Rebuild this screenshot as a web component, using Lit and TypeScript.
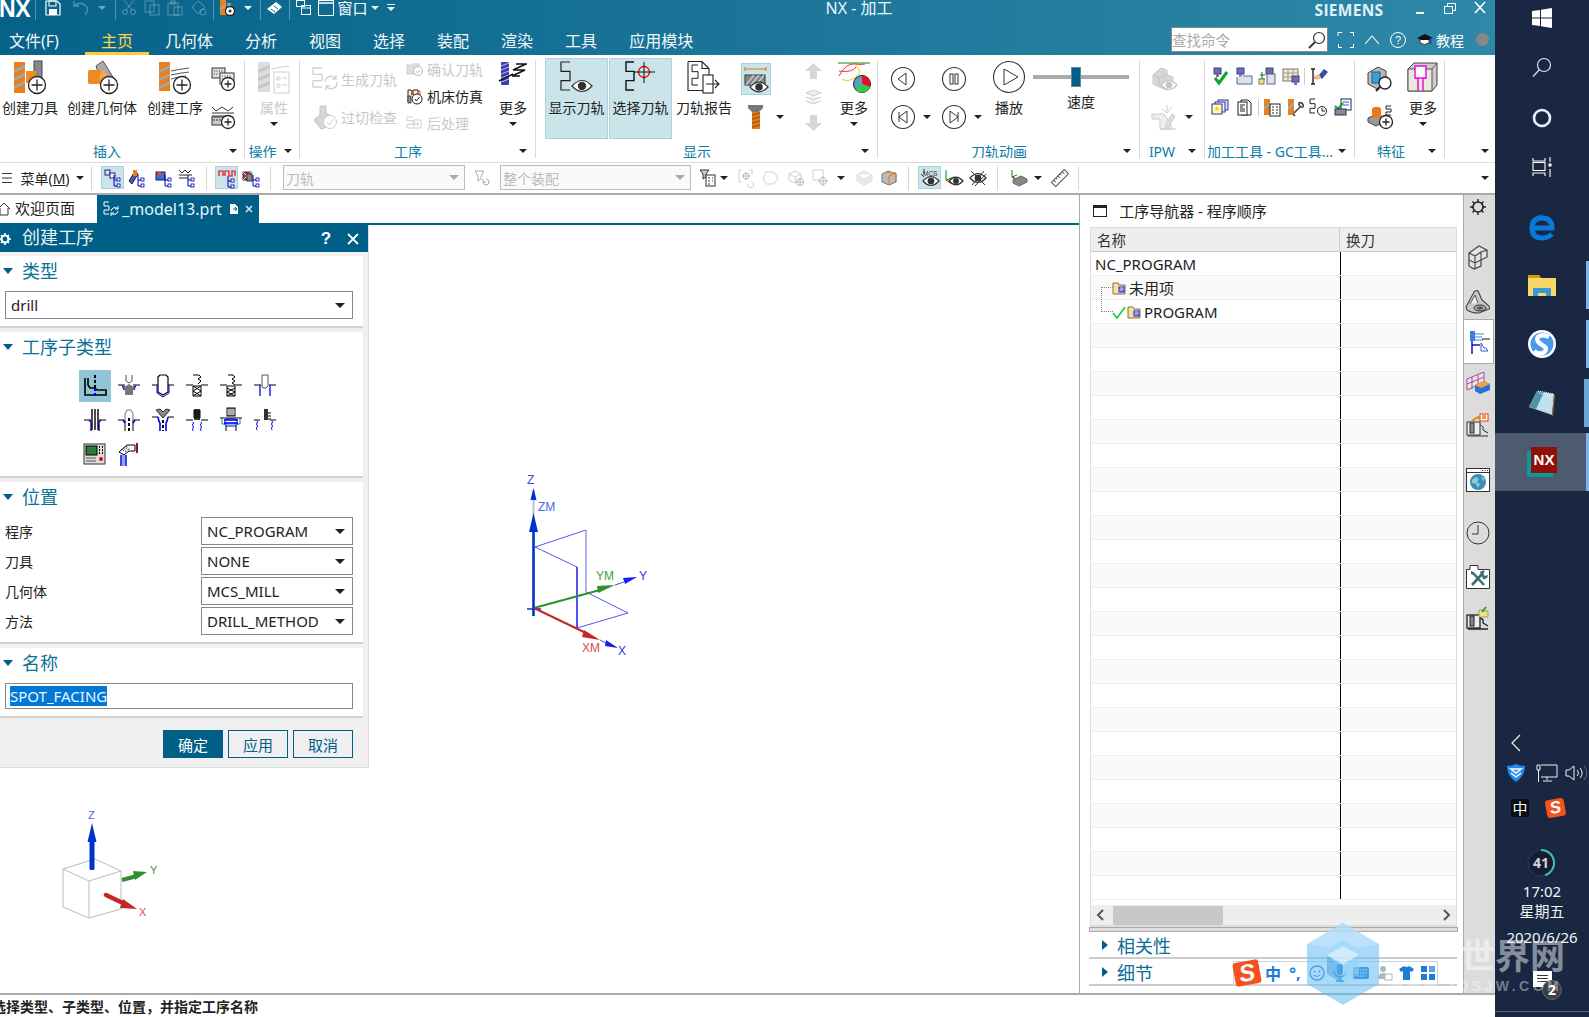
import { LitElement, html, svg, css } from "lit";
import { customElement } from "lit/decorators.js";

type Item = [number, number, unknown];
const seq = (start: number, items: Item[]) => {
  let p = start;
  return items.map(([x, w, t]) => {
    const m = x - p;
    p = x + w;
    return html`<div class="it" style="margin-left:${m}px;width:${w}px">${t}</div>`;
  });
};
const vseq = (start: number, items: Item[], cls = "vit") => {
  let p = start;
  return items.map(([y, h, t]) => {
    const m = y - p;
    p = y + h;
    return html`<div class=${cls} style="margin-top:${m}px;height:${h}px">${t}</div>`;
  });
};
const ic = (w: number, h: number, b: unknown) =>
  html`<svg class="ic" width=${w} height=${h} viewBox="0 0 ${w} ${h}">${b}</svg>`;
const tri = html`<i class="tri"></i>`;
const triW = html`<i class="tri w"></i>`;
const sep = html`<i class="sep"></i>`;

/* ---------- shared svg pieces ---------- */
const plus = (cx: number, cy: number, r = 8.5) => svg`<circle cx=${cx} cy=${cy} r=${r} fill="#fff" stroke="#222" stroke-width="1.3"/><path d="M${cx - r + 3} ${cy}H${cx + r - 3}M${cx} ${cy - r + 3}V${cy + r - 3}" stroke="#222" stroke-width="1.3" fill="none"/>`;
const mill = (x: number, y: number, w: number, h: number, c1 = "#e8801c", c2 = "#a5a5a5") => {
  const bands = [];
  for (let k = 5; k < h - 3; k += 8)
    bands.push(svg`<polygon points="${x},${y + k + 3} ${x + w},${y + k - 2} ${x + w},${y + k + 1} ${x},${y + k + 6}" fill=${c2}/>`);
  return svg`<rect x=${x} y=${y} width=${w} height=${h} fill=${c1}/>${bands}`;
};
const zz = (x: number, y: number, w: number, h: number, c = "#222", sw = 1.2) =>
  svg`<path d="M${x + w} ${y}H${x}V${y + h / 3}H${x + w}V${y + (2 * h) / 3}H${x}V${y + h}H${x + w}" fill="none" stroke=${c} stroke-width=${sw}/>`;
const eye = (cx: number, cy: number, rx: number, c = "#333") =>
  svg`<path d="M${cx - rx} ${cy}Q${cx} ${cy - rx * 1.1} ${cx + rx} ${cy}Q${cx} ${cy + rx * 1.1} ${cx - rx} ${cy}Z" fill="#fff" stroke=${c} stroke-width="1.2"/><circle cx=${cx} cy=${cy} r=${rx * 0.42} fill=${c}/>`;
const tree = (x: number, y: number) =>
  svg`<path d="M${x} ${y}v11h4M${x} ${y + 5}h4" stroke="#0000b0" fill="none"/><rect x=${x + 3} y=${y + 3} width="3" height="3" fill="#fff" stroke="#0000b0" stroke-width=".8"/><rect x=${x + 3} y=${y + 9} width="3" height="3" fill="#fff" stroke="#0000b0" stroke-width=".8"/>`;
const dg = "#cfcfcf";

/* ---------- ribbon icons ---------- */
const iTool = ic(34, 33, svg`${mill(1, 1, 11, 31)}<rect x="21" y="0" width="8" height="21" fill="#888" stroke="#444"/><rect x="13" y="10" width="10" height="12" fill="#ee8b1f"/>${plus(24, 24)}`);
const iGeom = ic(34, 33, svg`<polygon points="11,5 18,0 33,24 28,30 14,14" fill="#aaa" stroke="#555"/><rect x="3" y="9" width="15" height="14" rx="2" fill="#ee8b1f"/><ellipse cx="18" cy="16" rx="3.5" ry="7" fill="#f5a84a"/>${plus(24, 24)}`);
const iOp = ic(34, 33, svg`${mill(1, 1, 11, 29)}<path d="M13 10Q22 8 31 7M13 14Q22 12 31 11M13 18Q20 16 28 15" stroke="#555" fill="none"/>${plus(24, 24)}`);
const iSmall1 = ic(24, 24, svg`<rect x="1" y="1" width="13" height="10" fill="#ddd" stroke="#333"/><rect x="9" y="6" width="14" height="11" fill="#eee" stroke="#333"/><path d="M3 4h9M3 7h5M11 9h10M11 12h10" stroke="#333" stroke-dasharray="1 1.5"/>${plus(17, 17, 6.5)}`);
const iSmall2 = ic(24, 24, svg`<path d="M1 2l4 4 6-4 6 4 5-4M1 8h22M1 11h14" stroke="#333" fill="none"/><rect x="1" y="12" width="21" height="8" fill="#ccc" stroke="#333"/><path d="M2 15h18" stroke="#333" stroke-dasharray="2 1"/>${plus(17, 17, 6.5)}`);
const iAttr = ic(32, 33, svg`${mill(0, 1, 12, 30, "#ddd", "#c4c4c4")}<path d="M13 8Q22 6 31 5" stroke=${dg} fill="none"/><rect x="16" y="11" width="15" height="21" fill="#fff" stroke=${dg}/><path d="M19 16h3v3h-3zM24 17h5M19 23h3v3h-3zM24 24h5" stroke=${dg} fill="none"/>`);
const iGen = ic(25, 24, svg`${zz(0, 1, 9, 19, dg, 1.3)}<path d="M12 15a6 6 0 0 1 11-3M24 15a6 6 0 0 1-11 4M23 8v4h-4M13 23v-4h4" stroke=${dg} fill="none" stroke-width="1.3"/>`);
const iGouge = ic(25, 24, svg`<polygon points="1,15 7,10 7,1 13,1 13,8 20,12 20,20 8,24" fill="#d6d6d6" stroke="#c4c4c4"/><circle cx="17" cy="17" r="6.5" fill="#fff" stroke=${dg}/><path d="M14 17l2 3 4-6" stroke=${dg} fill="none"/>`);
const iConfirm = ic(16, 14, svg`<rect x="0" y="3" width="9" height="9" fill="#ddd" stroke=${dg}/><polygon points="5,1 12,1 14,6 9,8" fill="#ddd"/><circle cx="11" cy="9" r="4.5" fill="#fff" stroke="#bbb"/><path d="M9 9l1.5 2 2.5-3" stroke="#bbb" fill="none"/>`);
const iSim = ic(16, 16, svg`<path d="M1 14V2h3l2 5V2h5v5" stroke="#222" fill="#eee"/><rect x="4" y="2" width="2" height="5" fill="#d94d1a"/><path d="M10 3h3v4" stroke="#d94d1a" fill="none"/><circle cx="10" cy="11" r="5" fill="#fff" stroke="#222"/><path d="M8 11l1.5 2 3-4" stroke="#222" fill="none"/><rect x="1" y="8" width="3" height="7" fill="#999" stroke="#222" stroke-width=".7"/>`);
const iPost = ic(16, 14, svg`${zz(0, 1, 6, 11, dg, 1)}<rect x="7" y="4" width="7" height="8" fill="#fff" stroke=${dg}/><path d="M6 8h6M10 6l2 2-2 2" stroke=${dg} fill="none"/>`);
const iMoreA = ic(28, 24, svg`<rect x="2" y="1" width="8" height="23" rx="1" fill="#3d3fae"/><path d="M2 5l8-3M2 9l8-3M2 13l8-3M2 17l8-3M2 21l8-3" stroke="#b8b8e0" stroke-width="1"/><path d="M14 9L27 3H17L28 3M14 9H26L13 15M13 15H21M0 20L14 13" stroke="#111" stroke-width="1.5" fill="none"/>`);
const iShow = ic(33, 33, svg`${zz(1, 1, 9, 28)}${eye(22, 25, 10)}`);
const iSelect = ic(31, 31, svg`${zz(1, 1, 8, 28, "#111", 1.4)}<circle cx="19" cy="11" r="5.5" fill="none" stroke="#e00" stroke-width="1.3"/><path d="M19 1v21M9 11h21" stroke="#111"/>`);
const iReport = ic(34, 33, svg`<path d="M1 .5h14l7 7v11M1 .5v29h15M15 .5v7h7" fill="#fff" stroke="#222" stroke-width="1.1"/>${zz(5, 4, 6, 20, "#222", 1)}<rect x="16" y="14" width="10" height="18" fill="#fff" stroke="#222" stroke-width="1.1"/><path d="M19 23h13M28 19l4 4-4 4" stroke="#222" fill="none" stroke-width="1.1"/>`);
const iHlView = ic(28, 30, svg`<path d="M3 5h21M3 3v4M24 3v4" stroke="#e2761a" stroke-width="1.2"/><rect x="3" y="11" width="20" height="10" fill="#888" stroke="#333"/><path d="M4 21l8-10M9 21l8-10M14 21l8-10" stroke="#dde" stroke-width="1.2"/>${eye(17, 23, 9)}`);
const iScrew = ic(16, 24, svg`<polygon points="0,0 15,0 15,3 11,7 4,7 0,3" fill="#777"/><rect x="4" y="7" width="8" height="17" fill="#e07b1c"/><path d="M4 10l8-2M4 14l8-2M4 18l8-2M4 22l8-2" stroke="#a85a10" stroke-width="1.3"/>`);
const iUp = ic(17, 16, svg`<polygon points="8.5,0 17,8 12,8 12,16 5,16 5,8 0,8" fill="#d6d6d6"/>`);
const iLayers = ic(17, 16, svg`<path d="M1 4l7.5-3 7.5 3-7.5 3zM1 8l7.5 3 7.5-3M1 12l7.5 3 7.5-3" stroke="#ccc" fill="#eee"/>`);
const iDown = ic(17, 16, svg`<polygon points="8.5,16 17,8 12,8 12,0 5,0 5,8 0,8" fill="#d6d6d6"/>`);
const iMoreB = ic(33, 32, svg`<path d="M0 2h32" stroke="#0a8a0a"/><path d="M1 15Q8 2 16 3T27 3M1 10Q14 12 18 6" stroke="#e33" fill="none"/><path d="M4 18Q10 22 18 16T16 3" stroke="#f5c518" fill="none"/><circle cx="24" cy="23" r="8.5" fill="#5aa0b8" stroke="#222"/><path d="M24 23V14.5A8.5 8.5 0 0 1 32 26z" fill="#e8112d"/><path d="M24 23L32 26A8.5 8.5 0 0 1 18 29z" fill="#2ecc40"/>`);
const cBtn = (b: unknown, r = 11.5, w = 24) => ic(w, w, svg`<circle cx=${w / 2} cy=${w / 2} r=${r} fill="#fff" stroke="#333" stroke-width="1.1"/>${b}`);
const iPrev = cBtn(svg`<path d="M15 6L7 12l8 6z" fill="none" stroke="#333"/>`);
const iPause = cBtn(svg`<rect x="8" y="7" width="3" height="10" fill="none" stroke="#333"/><rect x="13" y="7" width="3" height="10" fill="none" stroke="#333"/>`);
const iPlay = cBtn(svg`<path d="M11 8l14 8-14 8z" fill="none" stroke="#333"/>`, 15.5, 32);
const iStepB = cBtn(svg`<path d="M8 7v10M16 6l-8 6 8 6z" fill="none" stroke="#333"/>`);
const iStepF = cBtn(svg`<path d="M16 7v10M8 6l8 6-8 6z" fill="none" stroke="#333"/>`);
const iIpw1 = ic(26, 24, svg`<polygon points="1,8 9,1 15,3 15,8 21,10 21,14 24,17 14,23 1,17" fill="#d6d6d6" stroke="#c8c8c8"/><path d="M1 8l6 3 8-3M7 11v8" stroke="#c0c0c0" fill="none"/>${eye(17, 18, 8, "#c4c4c4")}`);
const iIpw2 = ic(26, 24, svg`<path d="M0 9h12l7 11v4H8V14H0z" fill="#eee" stroke="#ccc"/><path d="M15 0v8M20 2l-5 6M10 4l5 4" stroke="#ccc"/><path d="M13 21l7-12 3 2-7 12zM8 24h16" fill="#ddd" stroke="#ccc"/>`);
const head = (x: number, y: number) => svg`<rect x=${x} y=${y} width="7" height="6" fill="#6a6ac0" stroke="#446"/><rect x=${x + 2} y=${y + 6} width="3" height="3" fill="#9a5fc0"/>`;
const g1 = ic(17, 17, svg`${head(2, 0)}<path d="M3 10l4 5 8-11" stroke="#0aa52a" stroke-width="3" fill="none"/>`);
const g2 = ic(17, 17, svg`${head(1, 0)}<path d="M1 9v7h15V8h-9" fill="#d8e4f2" stroke="#667"/>`);
const g3 = ic(17, 17, svg`${head(7, 0)}<rect x="8" y="6" width="8" height="10" fill="#d8e4f2" stroke="#667"/><path d="M3 4v12M1 7h5M1 11h5" stroke="#0a7a0a"/><rect x="0" y="11" width="5" height="5" fill="#f5e27a" stroke="#777"/>`);
const g4 = ic(17, 17, svg`<rect x="0" y="1" width="15" height="12" fill="#f3edc6" stroke="#777"/><path d="M0 5h15M0 9h15M5 1v12M10 1v12" stroke="#999"/>${head(9, 8)}`);
const g5 = ic(17, 17, svg`<path d="M2 1v15M0 1h4M0 16h4" stroke="#222" stroke-width="1.4"/><path d="M3 10h6" stroke="#b05" /><polygon points="7,8 13,1 17,4 11,11" fill="#2f50b0"/><polygon points="3,8 8,6 10,10 5,12" fill="#f0c090"/>`);
const g6 = ic(17, 17, svg`<rect x="6" y="1" width="10" height="10" fill="#d8e4ff" stroke="#338"/><rect x="3" y="3" width="10" height="10" fill="#ecf0ff" stroke="#338"/><rect x="0" y="5" width="10" height="10" fill="#fff8c0" stroke="#338"/><path d="M5 7l1 2h2l-2 1 1 2-2-1-2 1 1-2-2-1h2z" fill="#f5d000"/>`);
const g7 = ic(15, 17, svg`<path d="M4 1h7l3 3v12H4z" fill="#fff" stroke="#222"/><rect x="1" y="3" width="9" height="13" fill="#fff" stroke="#222"/><path d="M3 6h5M3 8h3M3 10h5M3 12h5" stroke="#222"/>`);
const g8 = ic(16, 17, svg`${mill(0, 0, 6, 16)}<rect x="6" y="5" width="10" height="12" fill="#fff" stroke="#222"/><path d="M8 8h2M12 8h2M8 11h2M12 11h2M8 14h2M12 14h2" stroke="#222"/>`);
const g9 = ic(16, 17, svg`${mill(0, 0, 6, 16)}<path d="M6 14l7-7M11 4a3 3 0 0 1 4 4l-2 0-2-2zM5 15l2 2" stroke="#444" stroke-width="1.6" fill="none"/>`);
const g10 = ic(17, 17, svg`${zz(0, 0, 5, 14, "#222", 1)}<circle cx="12" cy="12" r="4.5" fill="#fff" stroke="#222"/><path d="M12 9v3h3" stroke="#222" fill="none"/>`);
const g11 = ic(17, 17, svg`<rect x="7" y="0" width="10" height="11" fill="#fff" stroke="#225"/><path d="M9 3h6M9 6h6" stroke="#2464d0"/><path d="M1 7l3 3 5-6" stroke="#0aa52a" stroke-width="2" fill="none"/><rect x="1" y="10" width="11" height="6" fill="#889" stroke="#334"/>`);
const f1 = ic(26, 24, svg`<polygon points="1,6 11,0 19,4 19,16 10,22 1,17" fill="#b8b8b8" stroke="#444"/><rect x="5" y="5" width="8" height="11" fill="#38a0d8" stroke="#16608a"/><circle cx="18" cy="16" r="6" fill="#fff" stroke="#222" stroke-width="1.3"/><path d="M13 20l-4 4" stroke="#222" stroke-width="2"/>`);
const f2 = ic(30, 29, svg`<polygon points="0,6 6,0 29,0 29,22 24,28 0,28" fill="#ccc" stroke="#444"/><polygon points="0,6 24,6 24,28 0,28" fill="#e8e8de" stroke="#555"/><path d="M24 6l5-6" stroke="#555"/><path d="M7 15h3v13M18 15h-3v13" stroke="#f000d8" stroke-width="1.4" fill="none"/><rect x="7" y="3" width="11" height="12" fill="#fff" stroke="#f000d8" stroke-width="1.4"/>`);
const f3 = ic(26, 24, svg`<polygon points="1,13 10,9 18,13 18,17 9,21 1,17" fill="#999" stroke="#444"/><rect x="5" y="2" width="9" height="11" rx="3" fill="#e8791a"/>${zz(19, 1, 5, 9, "#222", 1)}${plus(19, 17, 6.5)}`);

/* ---------- toolbar icons ---------- */
const t1 = ic(17, 18, svg`<rect x="1" y="1" width="5" height="5" fill="#dde" stroke="#228"/><rect x="6" y="4" width="5" height="5" fill="#fff" stroke="#228"/>${tree(10, 6)}`);
const t2 = ic(17, 18, svg`<polygon points="1,12 7,2 10,5 4,15" fill="#4a55c0" stroke="#223"/><rect x="5" y="1" width="4" height="6" fill="#e8801c"/>${tree(10, 6)}`);
const t3 = ic(17, 18, svg`<rect x="1" y="3" width="9" height="8" fill="#3b6fd8" stroke="#225"/><rect x="3" y="3" width="3" height="4" fill="#e8402a"/>${tree(10, 6)}`);
const t4 = ic(17, 18, svg`<path d="M1 1l3 3 3-3 3 3 3-3M1 6h13M1 9h9" stroke="#223" fill="none"/>${tree(10, 6)}`);
const t5 = ic(18, 18, svg`<path d="M1 7V2h4v5M7 7V2h4v5h3V2h3v5" stroke="#e01010" stroke-width="1.2" fill="none"/>${tree(10, 7)}`);
const t6 = ic(17, 18, svg`<rect x="1" y="3" width="8" height="8" fill="#b33" stroke="#333"/><path d="M1 3l8 8M9 3l-8 8" stroke="#ddd"/><rect x="5" y="5" width="5" height="7" fill="#888" stroke="#333"/>${tree(11, 6)}`);
const t7 = ic(17, 18, svg`<path d="M1 2h9l-3 5v3l-3 2V7z" fill="#fff" stroke="#aaa"/><path d="M9 13a3 3 0 1 0 3-3M9 10v3h3" stroke="#aaa" fill="none"/>`);
const t8 = ic(17, 18, svg`<path d="M1 1h9l-3 4v3l-3 2V5z" fill="#ccc" stroke="#333"/><rect x="7" y="6" width="9" height="11" fill="#fff" stroke="#333"/><path d="M9 9h2M13 9h1M9 12h2M13 12h1M9 15h2" stroke="#333"/>`);
const t9 = ic(17, 18, svg`<path d="M4 1H1v12h3M11 1h3v5" stroke=${dg} fill="none"/><circle cx="8" cy="7" r="3" fill="none" stroke="#bbb"/><path d="M8 3v8M4 7h8" stroke="#bbb"/><path d="M10 15a3 3 0 1 0 4-2" stroke=${dg} fill="none"/>`);
const t10 = ic(17, 18, svg`<polygon points="4,3 12,3 16,9 12,15 4,15 1,9" fill="#fff" stroke=${dg}/>`);
const t11 = ic(17, 18, svg`<path d="M1 5l6-3 6 3v6l-6 3-6-3zM1 5l6 3 6-3M7 8v6" fill="#fff" stroke=${dg}/><circle cx="12" cy="13" r="3.5" fill="#fff" stroke="#bbb"/><path d="M12 9v8M8 13h8" stroke="#bbb"/>`);
const t12 = ic(17, 18, svg`<path d="M1 1h10v10H1z" fill="#fff" stroke=${dg}/><circle cx="11" cy="12" r="3.5" fill="#fff" stroke="#bbb"/><path d="M11 7v10M6 12h10" stroke="#bbb"/>`);
const t13 = ic(17, 18, svg`<path d="M1 6l7-4 8 4-8 4zM1 6v6l7 4 8-4V6M1 9l7 4 8-4" fill="#eee" stroke="#ddd"/>`);
const t14 = ic(16, 18, svg`<path d="M1 5l6-3 8 3v8l-7 3-7-3z" fill="#bbb" stroke="#777"/><path d="M8 7v9M8 7l7-3" stroke="#e2761a" fill="none"/><path d="M6 3l9 1v9" stroke="#e2761a" fill="none"/>`);
const t15 = ic(19, 18, svg`<path d="M4 0v5M1 5l3 3" stroke="#333"/><text x="3" y="6.5" font-size="6.5" font-family="Liberation Sans" fill="#333">MCS</text>${eye(11, 12, 8)}`);
const axesEye = ic(18, 18, svg`<path d="M1 1v10" stroke="#0a8a0a"/><path d="M1 11l8-3" stroke="#0a8a0a"/><path d="M1 11l6 4" stroke="#d01010"/>${eye(11, 12, 7)}`);
const axesNo = ic(18, 18, svg`${eye(9, 9, 8)}<path d="M3 16L15 2M6 17L17 5" stroke="#333"/><path d="M2 2l14 14" stroke="#333"/>`);
const t16 = ic(18, 18, svg`<path d="M2 1v7l7 3M2 8l5-2" stroke="#0a8a0a" fill="none"/><path d="M2 8l4 3" stroke="#d01010"/><polygon points="3,11 11,7 17,10 17,13 9,17 3,14" fill="#888" stroke="#666"/>`);
const t17 = ic(16, 18, svg`<g transform="rotate(-45 8 9)"><rect x="-1" y="6" width="18" height="6" fill="#fff" stroke="#555"/><path d="M2 6v3M5 6v2M8 6v3M11 6v2M14 6v3" stroke="#555"/></g>`);

/* ---------- operation subtype icons ---------- */
const line = (d: string, c = "#000", w = 1) => svg`<path d=${d} stroke=${c} stroke-width=${w} fill="none"/>`;
const dash = (x: number, y1: number, y2: number) => svg`<path d="M${x} ${y1}V${y2}" stroke="#000" stroke-width="2" stroke-dasharray="3 2"/>`;
const SUR = "M1 11h7M16 11h7";
const sub: unknown[] = [
  ic(24, 24, svg`${line("M2 4V21H23V16H14L12 14H7L5 11V4", "#000", 1.6)}${dash(12, 1, 14)}<path d="M12 14v9" stroke="#0000ee" stroke-width="2" stroke-dasharray="3 2"/>`),
  ic(24, 24, svg`${line(SUR)}<path d="M9 1v6l3 2 3-2V1" stroke="#555" fill="#fff"/><path d="M5 11l4 1 3-2 3 2 4-1-2 5h-1v5H8v-5H7z" fill="#777"/>${line("M7 16l-2-5M17 16l2-5", "#00e")}`),
  ic(24, 24, svg`${line(SUR)}<path d="M7 3l2-2h6l2 2v15l-5 3-5-3z" fill="#fff" stroke="#000" stroke-width="1.2"/><path d="M6 11v8l6 4 6-4v-8" stroke="#0000ee" fill="none"/>`),
  ic(24, 24, svg`${line(SUR)}${line("M8 1h6l2 2-3 2 3 2-3 3", "#000")}<path d="M8 12l8 0v10H8z" fill="#fff" stroke="#000"/>${line("M8 12l8 5-8 5M16 12l-8 5 8 5", "#000", 1)}`),
  ic(24, 24, svg`${line(SUR)}${line("M9 1h5l2 2-3 2 3 2-3 2 3 2", "#000")}<path d="M8 12h8v10H8z" fill="#fff" stroke="#000"/>${line("M8 14l8 4M16 14l-8 4M8 18l8 4M16 18l-8 4", "#000")}`),
  ic(24, 24, svg`${line(SUR)}<path d="M9 1h6v11l-2 2h-3l-1-2z" fill="#fff" stroke="#555"/>${line("M7 11V22M17 11V22", "#00e", 1.3)}`),
  ic(24, 24, svg`${line("M1 12h7M16 12h7")}${line("M6 12l2 2v9M18 12l-2 2v9", "#00e", 1.4)}${line("M9 1v21M12 1v21M15 1v21", "#000", 1.4)}`),
  ic(24, 24, svg`${line("M1 12h6M17 12h6")}${line("M8 6l2-4h4l2 4v6", "#777")}${line("M8 6v6", "#777")}${line("M8 12v11M16 12v11", "#000")}<path d="M6 12l2 3M18 12l-2 3" stroke="#00e" stroke-width="1.6"/>${dash(12, 10, 23)}`),
  ic(24, 24, svg`${line("M1 9h6M17 9h6")}<path d="M5 2l7 8 7-8-4-1-3 3-3-3z" fill="#888" stroke="#333"/>${line("M7 9q1 5 2 6v8M17 9q-1 5-2 6v8", "#00e", 1.6)}${dash(12, 12, 23)}`),
  ic(24, 24, svg`${line("M1 12h7M16 12h7")}<rect x="9" y="1" width="6" height="11" fill="#333"/><path d="M8 3h8M8 5h8M8 7h8M8 9h8" stroke="#000"/>${line("M8 14q1 1 0 2t0 2 0 2 0 3M16 14q1 1 0 2t0 2 0 2 0 3", "#00e")}`),
  ic(24, 24, svg`<rect x="8" y="0" width="8" height="8" fill="#888" stroke="#000"/><path d="M8 2h8M8 4h8M8 6h8" stroke="#ccc"/>${line("M1 10h22", "#000")}<path d="M3 10v6h18v-6" stroke="#0a8a8a" fill="none"/>${line("M5 12h14M5 15h14", "#00e", 1.3)}<rect x="6" y="11" width="12" height="7" rx="2" stroke="#00e" fill="none"/>${line("M7 18v5M17 18v5")}`),
  ic(24, 24, svg`${line("M1 12h6M17 12h6")}<rect x="11" y="1" width="4" height="11" fill="#333"/><path d="M15 5h3M15 8h3M15 11h3" stroke="#000"/>${line("M4 13q1 1 0 2t0 2 0 2 0 3M19 13q1 1 0 2t0 2 0 2 0 3", "#00e")}`),
  ic(24, 22, svg`<rect x="1" y="1" width="21" height="20" fill="#ddd" stroke="#333"/><rect x="3" y="3" width="11" height="9" fill="#2d7a3a" stroke="#000"/><path d="M16 4h1M19 4h1M16 7h1M19 7h1M16 10h1M19 10h1" stroke="#000" stroke-width="2"/><path d="M3 15h10M3 18h10" stroke="#555"/><circle cx="18" cy="16" r="2" fill="#e00"/>`),
  ic(24, 24, svg`<path d="M2 10l8-7h8v6h-6l-5 4z" fill="#fff" stroke="#000"/><path d="M4 8l6-4M6 9l5-4M8 10l5-4" stroke="#000" stroke-dasharray="1 1"/><rect x="19" y="1" width="2" height="10" fill="#8a1a2a"/>${line("M4 13V24M9 13V24", "#00e", 1.5)}<rect x="5" y="13" width="3" height="11" fill="#8ad"/>`),
];

/* ---------- nav side icons ---------- */
const sGear = ic(18, 18, svg`<circle cx="9" cy="9" r="5" fill="none" stroke="#222" stroke-width="1.6"/><path d="M9 1v3M9 14v3M1 9h3M14 9h3M3.5 3.5l2 2M12.5 12.5l2 2M14.5 3.5l-2 2M3.5 14.5l2-2" stroke="#222" stroke-width="1.4"/>`);
const sCube = ic(20, 24, svg`<path d="M1 8L11 1l8 4v7l-6 3v6l-7 3-5-3z" fill="#e4e4e4" stroke="#444" stroke-width="1.2"/><path d="M1 8l6 3 6-4 6-2M7 11v13M1 15l6 3 6-3M13 7v8" stroke="#444" fill="none" stroke-width="1.1"/>`);
const sBracket = ic(26, 24, svg`<path d="M1 17L9 2q2-2 4-1l4 9 7 6q1 2 0 3l-10 4q-8 0-12-3z" fill="#c8c8c8" stroke="#444" stroke-width="1.1"/><path d="M5 14L10 5l3 8" fill="#eee" stroke="#555"/><ellipse cx="15" cy="18" rx="6" ry="3" fill="#aaa" stroke="#333"/><ellipse cx="15" cy="18" rx="3" ry="1.5" fill="#555"/>`);
const sNav = ic(22, 24, svg`<path d="M4 1v23" stroke="#0000c8" stroke-width="1.4"/><rect x="2" y="1" width="5" height="10" fill="#3d80d8"/><path d="M7 4h9M7 7h7M5 10h10" stroke="#3d80d8"/><path d="M14 9h8" stroke="#111"/><path d="M4 15h8" stroke="#0000c8" stroke-width="1.4"/><path d="M13 13v8h7l-2-3h-2l-3-5z" fill="#fff" stroke="#3060d0"/>`);
const sTable = ic(24, 24, svg`<path d="M1 8l17-7v10L1 19z" fill="#f8e8c8" stroke="#8a50c8"/><path d="M6 6v12M12 3v11M1 13l17-7" stroke="#8a50c8"/><polygon points="9,14 18,10 24,13 24,19 14,23 9,20" fill="#2b6fd8"/><polygon points="9,14 18,10 24,13 15,17" fill="#f0a040"/>`);
const sCam = ic(24, 24, svg`<rect x="1" y="9" width="13" height="13" fill="#eee" stroke="#333"/><rect x="4" y="10" width="4" height="10" fill="#889" stroke="#333"/><path d="M14 12q4 1 3 5l5 3M2 23h20" stroke="#333" fill="none"/><rect x="14" y="1" width="8" height="7" fill="#fff" stroke="#e33"/><path d="M6 8l6-4 2 2" stroke="#e8801c" stroke-width="2" fill="none"/><rect x="16" y="2" width="4" height="4" fill="#e8a020"/>`);
const sGlobe = ic(24, 24, svg`<rect x=".5" y=".5" width="23" height="23" fill="#fff" stroke="#333"/><path d="M0 4.5h24M16 2.5h1M18.500 2.500h1M21 2.500h1" stroke="#333"/><circle cx="12" cy="14" r="8" fill="#3a8fb0"/><path d="M6 12l4-3 3 2-2 3 3 2-2 4-2-4-4-1zM15 8l4 3-2 2z" fill="#8ac8d8"/>`);
const sClock = ic(24, 24, svg`<circle cx="12" cy="12" r="11" fill="none" stroke="#333"/><path d="M12 4v9H6" stroke="#333" fill="none"/>`);
const sTools = ic(24, 24, svg`<path d="M.5 23.500V4.500H4V.5h8v4h11.500v19z" fill="#fff" stroke="#333"/><path d="M6 20L17 8M18 20L8 9" stroke="#3d6d78" stroke-width="2.6"/><path d="M14 7a4 4 0 0 1 5-1l-2 3 2 2 3-1a4 4 0 0 1-5 4" fill="#3d6d78"/><path d="M5 6l3 1 1 2-2 1-2-1z" fill="#3d6d78"/>`);
const sCam2 = ic(24, 24, svg`<rect x="1" y="9" width="13" height="13" fill="#eee" stroke="#222" stroke-width="1.3"/><rect x="4" y="10" width="4" height="10" fill="#889" stroke="#222"/><path d="M14 12q4 1 3 5l5 3M2 23h20" stroke="#222" fill="none" stroke-width="1.3"/><path d="M13 4h4l1 1h4v6H13z" fill="#f0e27a" stroke="#998"/><path d="M16 6l4-5" stroke="#2a9a2a" stroke-width="2"/>`);

/* ---------- small chrome icons ---------- */
const folder = (w = 14) => ic(w, 13, svg`<path d="M1 3V1h5l1 2h6v9H1z" fill="#f3e2a0" stroke="#8a7230"/><rect x="7" y="5" width="5" height="5" fill="#fff" stroke="#0000e0" stroke-width=".9"/><path d="M7 7h4M8 9h4" stroke="#0000e0" stroke-width=".8"/>`);
const tbEdge = ic(28, 28, svg`<path d="M5 15H24Q24 5 14 5T4 15 14 25Q20 25 24 21" fill="none" stroke="#0a78d8" stroke-width="5"/><path d="M2 14Q3 3 16 1q-7 3-8 8z" fill="#0a78d8"/>`);
const tbFolder = ic(28, 24, svg`<path d="M0 2h11l2 3h15v18H0z" fill="#f7d866"/><path d="M0 2h11l2 3H0z" fill="#d79a14"/><path d="M5 23v-7q0-1 1-1h16q1 0 1 1v7h-5v-3h-8v3z" fill="#3c95d6"/>`);
const tbSogou = ic(30, 30, svg`<circle cx="15" cy="15" r="14" fill="#fff"/><circle cx="15" cy="15" r="11.500" fill="#4a98ea"/><path d="M22 8C14 4 8 8 11 12.500S21 17 18.500 21.500 10 25 7 22" stroke="#fff" stroke-width="4.500" fill="none"/>`);
const tbNote = ic(28, 28, svg`<polygon points="9,2 26,5 24,26 1,18" fill="#bfe0ec"/><polygon points="1,18 9,2 16,3 8,20" fill="#4f93a8"/><path d="M10 2l16 3M11 4l15 3" stroke="#eef" stroke-dasharray="1 1"/><polygon points="14,21 24,26 26,5 27,7 25,27" fill="#8a7040"/>`);
const tbWin = ic(20, 20, svg`<polygon points="0,3 8,2 8,9.500 0,9.500" fill="#fff"/><polygon points="9,1.800 20,0 20,9.500 9,9.500" fill="#fff"/><polygon points="0,10.500 8,10.500 8,18 0,17" fill="#fff"/><polygon points="9,10.500 20,10.500 20,20 9,18.200" fill="#fff"/>`);
const tbSearch = ic(20, 20, svg`<circle cx="12" cy="8" r="6.500" fill="none" stroke="#dde" stroke-width="1.2"/><path d="M7.500 12.500L1 19.500" stroke="#dde" stroke-width="1.3"/>`);
const tbCortana = ic(20, 20, svg`<circle cx="10" cy="10" r="8" fill="none" stroke="#eef" stroke-width="2.6"/>`);
const tbTask = ic(20, 20, svg`<path d="M1 1v3h12V1M1 5.500h12v8H1zM1 19v-3h12v3M18 0v5M18 12v8" stroke="#fff" fill="none" stroke-width="1.1"/><rect x="16.500" y="6.500" width="3" height="3" fill="#fff"/>`);
const trayShield = ic(20, 20, svg`<path d="M1 3q5 0 9-2 4 2 9 2 0 10-9 16Q1 13 1 3z" fill="#1e8af0"/><path d="M5 6h10l-5 4zM5 10l5 4 5-4" fill="none" stroke="#fff" stroke-width="1.6"/>`);
const trayMon = ic(22, 20, svg`<path d="M5 2h16v12H5M11 14v3M7 18h9M1 2h3v5H1zM2.500 7v12" fill="none" stroke="#eee"/>`);
const traySpk = ic(24, 20, svg`<path d="M1 7h3l5-4v14l-5-4H1z" fill="none" stroke="#eee"/><path d="M12 7a4 4 0 0 1 0 6M15 5a7 7 0 0 1 0 10" stroke="#eee" fill="none"/><path d="M19 3a10 10 0 0 1 0 14" stroke="#667" fill="none"/>`);
const ring = ic(30, 30, svg`<circle cx="15" cy="15" r="13" fill="#141d33" stroke="#253048" stroke-width="2"/><path d="M15 2a13 13 0 0 1 4 25.400" fill="none" stroke="#3fbf9f" stroke-width="2"/><text x="15" y="20" text-anchor="middle" font-size="14" font-weight="700" font-family="Noto Sans" fill="#cfd6dd">41</text>`);

@customElement("app-root")
export class AppRoot extends LitElement {
  static styles = css`
    :host { display: block; width: 1589px; height: 1017px; position: relative; overflow: hidden; background: #fff;
      font-family: "Noto Sans", "Noto Sans CJK SC", sans-serif; font-size: 14px; color: #222; }
    * { box-sizing: border-box; }
    .root { display: flex; width: 1589px; height: 1017px; }
    .main { width: 1495px; flex: none; display: flex; flex-direction: column; height: 1017px; }
    .it { flex: none; display: flex; justify-content: center; align-items: center; white-space: nowrap; }
    .ic { display: block; flex: none; overflow: visible; }
    .tri { display: block; flex: none; width: 0; height: 0; border-left: 4px solid transparent; border-right: 4px solid transparent; border-top: 4px solid #222; }
    .tri.w { border-top-color: #e8f2f6; }
    .sep { display: block; width: 1px; height: 20px; background: rgba(255,255,255,.3); }

    .head { height: 55px; flex: none; background: linear-gradient(90deg, #07628a, #2e88a8); color: #fff; }
    .trow { height: 28px; display: flex; align-items: flex-start; overflow: hidden; }
    .trow .tri { margin-top: 6px; }
    .dim { opacity: .45; }
    .ovf { border-top: 1.500px solid #e8f2f6; width: 8px; height: 12px; margin-top: 4px; }
    .ovf .tri { margin-top: 2px; }
    .nx { font: 700 23px/20px "Liberation Sans", sans-serif; margin-top: -1px; letter-spacing: -.5px; }
    .wt { font-size: 15px; line-height: 16px; }
    .ttl { font-size: 16px; line-height: 16px; color: #eef6fa; }
    .siemens { font: 700 15.5px/18px "Open Sans", sans-serif; letter-spacing: .3px; color: #dff1f6; margin-top: 1px; }
    .mrow { height: 27px; display: flex; align-items: stretch; font-size: 16px; }
    .mt { padding: 0 16px; line-height: 27px; color: #f2f8fa; white-space: nowrap; }
    .mt.f { width: 85px; padding: 0 0 0 9px; }
    .mt.on { color: #ffd24d; border-bottom: 3px solid #ffc83d; }
    .mright { margin-left: auto; width: 324px; display: flex; align-items: center; margin-top: -4px; height: 31px; }
    .search { width: 157px; height: 25px; background: #fff; border: 1px solid #888; display: flex; align-items: center; justify-content: space-between; color: #aaa; font-size: 14.5px; padding-right: 2px; }
    .dot { width: 13px; height: 13px; border-radius: 50%; background: #888; }
    .tut { font-size: 14px; color: #fff; }

    .ribbon { height: 108px; flex: none; border-bottom: 1px solid #ddd; display: flex; padding-top: 5px; background: #fff; }
    .grp { flex: none; height: 98px; display: flex; flex-direction: column; border-right: 1px solid #d9d9d9; }
    .grp.last { border-right: none; }
    .gb { height: 83px; display: flex; align-items: flex-start; }
    .gb > .it { align-items: flex-start; }
    .gf { height: 15px; overflow: hidden; display: flex; align-items: flex-start; color: #0a7da6; line-height: 18px; font-size: 14px; }
    .gf > .it { align-items: flex-start; }
    .gf .tri { margin-top: 6px; }
    .big { display: flex; flex-direction: column; align-items: center; width: 100%; }
    .bi { margin-top: 1px; height: 33px; display: flex; justify-content: center; }
    .f2w { margin-top: 2px; }
    .bl { margin-top: 5px; line-height: 18px; white-space: nowrap; }
    .bt { margin-top: 5px; }
    .big.dis .bl { color: #c8c8c8; }
    .big.on { margin-top: -2px; height: 81px; background: #cbe4ea; border: 1px solid #aad3df; padding-top: 1px; }
    .st { display: flex; flex-direction: column; align-items: center; width: 100%; }
    .st.m7 { margin-top: 7px; gap: 14px; }
    .st.m3 { margin-top: 3px; gap: 10px; }
    .hlb { width: 30px; height: 32px; background: #cbe4ea; border: 1px solid #aad3df; display: flex; align-items: center; justify-content: center; }
    .lrow { display: flex; align-items: center; gap: 3px; height: 24px; color: #c8c8c8; white-space: nowrap; width: 100%; }
    .lst { display: flex; flex-direction: column; width: 100%; }
    .lst.a { margin-top: 7px; gap: 14px; }
    .lst.b { margin-top: -5px; }
    .lst.b .lrow { height: 27px; gap: 4px; }
    .lrow.k { color: #222; }
    .at { margin-top: 55px; }
    .slider { width: 100%; margin-top: 7px; display: flex; flex-direction: column; align-items: center; }
    .track { width: 100%; height: 20px; position: relative; display: flex; justify-content: center; align-items: center; }
    .track::before { content: ""; width: 100%; height: 4px; background: #aaa; }
    .thumb { position: absolute; left: 38px; top: 0; width: 10px; height: 20px; background: #005f87; border: 1px solid #5a8ca4; }
    .sl { margin-top: 6px; line-height: 18px; }
    .gcol { display: flex; flex-direction: column; }
    .grow { display: flex; height: 17px; align-items: flex-start; }
    .grow .it { height: 17px; }
    .grow.r1 { margin-top: 8px; }
    .grow.r2 { margin-top: 14px; }
    .vb { width: 1px; height: 17px; background: #ccc; }

    .tools { height: 32px; flex: none; border-bottom: 2px solid #aaa; display: flex; align-items: center; padding-bottom: 1px; background: #fff; white-space: nowrap; }
    .vs { width: 1px; height: 24px; background: #d4d4d4; }
    .hl { width: 23px; height: 23px; background: #cbe4ea; border: 1px solid #aad3df; display: flex; align-items: center; justify-content: center; }
    .combo { width: 100%; height: 25px; border: 1px solid #bbb; display: flex; align-items: center; justify-content: space-between; padding: 0 5px 0 2px; color: #bbb; background: #fafafa; }
    .combo .tri { border-top-color: #aaa; border-left-width: 5px; border-right-width: 5px; border-top-width: 5px; }
    .menu { font-size: 14px; }

    .work { flex: 1; display: flex; min-height: 0; }
    .left { width: 1079px; flex: none; display: flex; flex-direction: column; }
    .docs { height: 30px; flex: none; border-bottom: 2px solid #005f87; display: flex; align-items: stretch; }
    .docs .it { height: 28px; }
    .dt { font-size: 15px; line-height: 24px; margin-bottom: 3px; }
    .dact { background: #005f87; color: #eaf3f7; }
    .dact-in { font-size: 16px; width: 100%; height: 100%; display: flex; align-items: center; }
    .canvas { flex: 1; position: relative; background: #fff; min-height: 0; }
    .cv { position: absolute; left: 0; top: 0; }

    .dlg { position: relative; width: 369px; height: 543px; background: #f0f0f0; border-right: 1px solid #ddd; border-bottom: 1px solid #ddd; }
    .dtitle { height: 27px; background: #005f87; color: #eaf3f7; display: flex; align-items: center; font-size: 18px; }
    .dtt { line-height: 22px; margin-bottom: 4px; }
    .q { font: 700 17px/20px "Liberation Sans", sans-serif; color: #fff; }
    .sec { width: 363px; background: #fff; border-bottom: 2px solid #d2d2d2; margin-top: 4px; padding: 0 10px 0 5px; }
    .sec.s1 { height: 72px; } .sec.s2 { height: 146px; } .sec.s3 { height: 162px; } .sec.s4 { height: 70px; }
    .sh { height: 30px; display: flex; align-items: center; margin-left: -2px; font-size: 18px; color: #0a7097; padding-bottom: 2px; }
    .dtri { width: 0; height: 0; border-left: 5.500px solid transparent; border-right: 5.500px solid transparent; border-top: 6px solid #005f87; margin-right: 9px; margin-top: 2px; }
    .sel { height: 28px; border: 1px solid #888; background: #fff; display: flex; align-items: center; justify-content: space-between; padding: 0 7px 0 5px; font-size: 15px; margin-top: 5px; width: 348px; }
    .sel .tri { border-left-width: 5px; border-right-width: 5px; border-top-width: 5px; }
    .grid { display: grid; grid-template-columns: repeat(6, 34px); grid-auto-rows: 34px; margin: 7px 0 0 73px; }
    .cell { display: flex; align-items: center; justify-content: center; }
    .cell.on { background: #90c4d6; width: 32px; height: 32px; }
    .prow { display: flex; align-items: center; justify-content: space-between; height: 28px; margin-bottom: 2px; }
    .rows { margin-top: 5px; width: 348px; }
    .prow .sel { width: 152px; margin-top: 0; }
    .inp { height: 26px; width: 348px; margin-top: 5px; border: 1px solid #888; background: #fff; padding-left: 4px; font-size: 15px; line-height: 20px; display: flex; align-items: center; }
    .inp span { background: #0078d7; color: #e8f4ff; height: 20px; display: block; }
    .btns { display: flex; justify-content: flex-end; gap: 5px; margin-top: 12px; padding-right: 15px; }
    .btn { width: 60px; height: 28px; border: 1px solid #005f87; background: #f0f0f0; color: #005f87; font-size: 15px; display: flex; align-items: center; justify-content: center; }
    .btn.p { background: #005f87; color: #fff; }

    .nav { width: 384px; flex: none; border-left: 1px solid #aaa; display: flex; flex-direction: column; background: #fff; }
    .nh { height: 32px; flex: none; display: flex; align-items: center; padding-bottom: 3px; padding-top: 2px; font-size: 15px; }
    .chk { width: 14px; height: 12px; border: 1.500px solid #222; border-top-width: 3px; display: block; }
    .tbl { width: 367px; height: 700px; margin-left: 10px; border: 1px solid #ddd; border-bottom-width: 2px; flex: none; display: flex; flex-direction: column; }
    .th { height: 24px; flex: none; background: #eee; border-bottom: 1px solid #ccc; display: flex; font-size: 14.500px; line-height: 25px; color: #333; }
    .th div:first-child { width: 249px; padding-left: 6px; border-right: 1px solid #ccc; }
    .th div:last-child { padding-left: 6px; }
    .tb { flex: 1; min-height: 0; overflow: hidden; }
    .tr { height: 24px; display: flex; border-bottom: 1px solid #eee; font-size: 15px; line-height: 23px; background: #fff; }
    .tr:nth-child(even) { background: #fafafa; }
    .c1 { width: 249px; position: relative; display: flex; align-items: center; white-space: nowrap; padding-top: 1px; }
    .c2 { flex: 1; border-left: 1px solid #000; }
    .tdots { position: absolute; left: 10px; border-left: 1px dotted #888; border-bottom: 1px dotted #888; width: 12px; }
    .td1 { top: 10px; height: 2px; border-left: none; left: 10px; }
    .td2 { top: -13px; height: 25px; }
    .n1 { padding-left: 4px; } .n2 { padding-left: 21px; gap: 3px; } .n3 { padding-left: 21px; gap: 1px; }
    .n3 span { margin-left: 2px; }
    .sb { height: 20px; flex: none; background: #eee; display: flex; align-items: center; margin-bottom: 0; }
    .sbt { width: 110px; height: 19px; background: #c8c8c8; margin-left: 4px; }
    .sa { width: 18px; display: flex; justify-content: center; }
    .sbsp { flex: 1; }
    .band { width: 369px; margin-left: 9px; height: 5px; flex: none; background: #ddd; border: 1px solid #aaa; }
    .sct { width: 368px; margin-left: 9px; height: 27px; flex: none; border-bottom: 2px solid #ccc; display: flex; align-items: center; padding-left: 13px; font-size: 18px; color: #0a7097; }
    .rtri { width: 0; height: 0; border-top: 5.500px solid transparent; border-bottom: 5.500px solid transparent; border-left: 6px solid #005f87; margin-right: 9px; }
    .side { width: 32px; flex: none; background: #dcdcdc; border-left: 1px solid #aaa; display: flex; flex-direction: column; align-items: stretch; }
    .vit { display: flex; align-items: center; justify-content: center; flex: none; padding-right: 4px; }
    .side .act { background: #fff; border: 1px solid #aaa; border-left: none; width: 30px; height: 100%; display: flex; align-items: center; justify-content: center; margin-right: -4px; margin-left: -1px; }

    .status { height: 24px; flex: none; border-top: 2px solid #aaa; background: #fff; font-weight: 700; font-size: 14px; line-height: 24px; overflow: hidden; white-space: nowrap; margin-top: 0; color: #222; }
    .status span { margin-left: -8px; display: block; }

    .task { width: 94px; flex: none; height: 1017px; background: #1a2742; display: flex; flex-direction: column; color: #fff; overflow: hidden; }
    .tbi { display: flex; align-items: center; justify-content: center; flex: none; position: relative; }
    .tbi.acc::after { content: ""; position: absolute; right: 0; top: 5px; bottom: 5px; width: 3px; background: #7ab6ea; }
    .tbi.acc.w::after { width: 5px; background: #6aa8d8; }
    .tbi.on { background: #4e5a70; }
    .tbi.on::after { top: 0; bottom: 0; }
    .nxi { position: relative; width: 30px; height: 30px; }
    .nxi i { position: absolute; left: 0; top: 4px; width: 26px; height: 26px; background: #0a9a9a; }
    .nxi b { position: absolute; left: 4px; top: 0; width: 26px; height: 26px; background: #8f1008; color: #fff; font: 700 15px/26px "Liberation Sans", sans-serif; text-align: center; }
    .trayrow { display: flex; align-items: center; height: 100%; }
    .zh { color: #fff; font-size: 15px; line-height: 18px; padding: 0 1px; text-shadow: 0 0 2px #000, 0 0 2px #000; background: #0b0e16; }
    .slogo { display: flex; align-items: center; justify-content: center; background: #f4511e; color: #fff; font: italic 700 17px/20px "Liberation Sans", sans-serif; width: 19px; height: 18px; border-radius: 3px; transform: rotate(-10deg); }
    .slogo.lg { width: 26px; height: 24px; font-size: 24px; }
    .clk { display: flex; justify-content: center; font-size: 15px; line-height: 22px; color: #f2f4f7; white-space: nowrap; }
    .note { position: relative; width: 19px; height: 16px; background: #fff; }
    .note i { position: absolute; left: 4px; width: 11px; height: 1px; background: #333; }
    .note i.a { top: 4px; } .note i.b { top: 7px; } .note i.c { top: 10px; }
    .badge { position: absolute; left: 9px; top: 9px; width: 20px; height: 20px; border-radius: 50%; background: #3a3f48; border: 1px solid #666; color: #fff; font: 700 14px/18px "Noto Sans", sans-serif; text-align: center; }
    .tl { border-top: 1px solid #5a6478; height: 1px; width: 100%; }

    .ime { position: absolute; left: 1233px; top: 961px; width: 205px; height: 24px; background: #fff; border: 1px solid #ccd3dc; display: flex; align-items: center; color: #1c7cd6; }
    .ime-t { font-weight: 700; font-size: 16px; }
    .wm { position: absolute; left: 1307px; top: 923px; pointer-events: none; }
    .wmt { position: absolute; left: 1460px; top: 932px; font: 700 35px/44px "Noto Sans CJK SC", sans-serif; color: rgba(255,255,255,.48); letter-spacing: 0; white-space: nowrap; }
    .wmu { position: absolute; left: 1390px; top: 978px; font: 700 14px/16px "Liberation Sans", sans-serif; color: rgba(255,255,255,.4); letter-spacing: 3.500px; white-space: nowrap; }
  `;

  private big(label: string, icon: unknown, opts: { dis?: boolean; on?: boolean; arrow?: boolean } = {}) {
    return html`<div class="big ${opts.dis ? "dis" : ""} ${opts.on ? "on" : ""}">
      <div class="bi">${icon}</div><div class="bl">${label}</div>
      ${opts.arrow ? html`<div class="bt">${tri}</div>` : ""}
    </div>`;
  }

  private grp(w: number, body: unknown, foot: unknown, last = false) {
    return html`<div class="grp ${last ? "last" : ""}" style="width:${w}px"><div class="gb">${body}</div><div class="gf">${foot}</div></div>`;
  }

  private titleRow() {
    const d = (a: number) => `rgba(255,255,255,${a})`;
    return html`<div class="trow">${seq(0, [
      [0, 29, html`<span class="nx">NX</span>`],
      [35, 1, sep],
      [45, 16, ic(16, 16, svg`<path d="M1 1h11l3 3v11H1z" fill="none" stroke="#fff" stroke-width="1.2"/><rect x="4" y="1" width="7" height="5" fill="none" stroke="#fff"/><rect x="4" y="9" width="8" height="6" fill="#fff"/>`)],
      [73, 17, ic(17, 16, svg`<path d="M1 1v5h5M1 6q6-5 11-1t0 10" fill="none" stroke=${d(0.3)} stroke-width="1.3"/>`)],
      [98, 8, html`<i class="tri w dim"></i>`],
      [115, 1, sep],
      [121, 16, ic(16, 16, svg`<circle cx="4" cy="12" r="2.500" fill="none" stroke=${d(0.3)}/><circle cx="12" cy="12" r="2.500" fill="none" stroke=${d(0.3)}/><path d="M5 10L13 0M11 10L3 0" stroke=${d(0.3)}/>`)],
      [144, 16, ic(16, 16, svg`<rect x="1" y="1" width="9" height="11" fill="none" stroke=${d(0.3)}/><rect x="6" y="5" width="9" height="10" fill="none" stroke=${d(0.3)}/>`)],
      [167, 16, ic(16, 16, svg`<rect x="1" y="3" width="10" height="12" fill="none" stroke=${d(0.3)}/><rect x="4" y="1" width="4" height="3" fill="none" stroke=${d(0.3)}/><rect x="7" y="7" width="8" height="8" fill="none" stroke=${d(0.3)}/>`)],
      [191, 16, ic(16, 16, svg`<polygon points="7,1 14,7 7,14 1,7" fill="none" stroke=${d(0.3)}/><circle cx="12" cy="12" r="3" fill="none" stroke=${d(0.3)}/>`)],
      [213, 1, sep],
      [219, 16, ic(16, 16, svg`${mill(1, 0, 6, 15)}<rect x="8" y="3" width="4" height="3" fill="#999"/>${plus(11, 11, 4.5)}`)],
      [244, 8, triW],
      [260, 1, sep],
      [266, 17, ic(17, 16, svg`<polygon points="1,9 10,2 16,7 8,14" fill="#fff"/><path d="M5 9l4 3M8 6l4 3" stroke="#07628a"/>`)],
      [289, 1, sep],
      [296, 15, ic(15, 16, svg`<rect x=".5" y=".5" width="8" height="6" fill="none" stroke="#fff"/><rect x="5.500" y="5.500" width="9" height="9" fill="none" stroke="#fff"/><path d="M5.500 8h9" stroke="#fff"/>`)],
      [318, 16, ic(16, 16, svg`<rect x=".5" y=".5" width="15" height="15" fill="none" stroke="#fff"/><path d="M.5 3h15" stroke="#fff" stroke-width="1.5"/>`)],
      [339, 27, html`<span class="wt">窗口</span>`],
      [371, 8, triW],
      [387, 8, html`<div class="ovf">${triW}</div>`],
      [826, 66, html`<span class="ttl">NX - 加工</span>`],
      [1314, 70, html`<span class="siemens">SIEMENS</span>`],
      [1416, 8, ic(8, 16, svg`<rect x="0" y="12" width="8" height="2" fill="#fff"/>`)],
      [1444, 12, ic(12, 16, svg`<rect x=".5" y="6.500" width="8" height="7" fill="none" stroke="#fff"/><path d="M3.500 6V3.500h8v7H9" fill="none" stroke="#fff"/>`)],
      [1474, 12, ic(12, 16, svg`<path d="M1 2l10 11M11 2L1 13" stroke="#fff" stroke-width="1.6"/>`)],
    ])}</div>`;
  }

  private menuRow() {
    return html`<div class="mrow">
      <div class="mt f">文件(F)</div><div class="mt on">主页</div>
      ${["几何体", "分析", "视图", "选择", "装配", "渲染", "工具", "应用模块"].map((t) => html`<div class="mt">${t}</div>`)}
      <div class="mright">${seq(1171, [
        [1171, 157, html`<div class="search"><span>查找命令</span>${ic(17, 18, svg`<circle cx="11" cy="7" r="5.500" fill="#fff" stroke="#333" stroke-width="1.2"/><path d="M7 11l-6 6" stroke="#333" stroke-width="1.8"/>`)}</div>`],
        [1338, 16, ic(16, 16, svg`<path d="M0 4V.5h4M12 .5h3.500V4M15.500 12v3.500H12M4 15.500H.5V12" fill="none" stroke="#fff"/>`)],
        [1364, 16, ic(16, 10, svg`<path d="M1 9l7-8 7 8" fill="none" stroke="#fff" stroke-width="1.1"/>`)],
        [1390, 16, ic(16, 16, svg`<circle cx="8" cy="8" r="7.500" fill="none" stroke="#fff"/><text x="8" y="12" text-anchor="middle" font-size="11" font-family="Liberation Sans" fill="#fff">?</text>`)],
        [1417, 16, ic(16, 14, svg`<polygon points="0,5 8,1 16,5 8,9" fill="#111"/><path d="M3 7v3q5 3 9 0V7" fill="#fff" stroke="#333"/><path d="M14 5v6" stroke="#2a50d0" stroke-width="2"/>`)],
        [1436, 28, html`<span class="tut">教程</span>`],
        [1476, 13, html`<i class="dot"></i>`],
      ])}</div>
    </div>`;
  }

  private ribbon() {
    const foot = (start: number, label: string, lx: number, lw: number, ax: number) =>
      seq(start, [[lx, lw, html`<span>${label}</span>`], [ax - 4, 8, tri]]);
    return html`<div class="ribbon">
      ${this.grp(245, seq(0, [
        [0, 60, this.big("创建刀具", iTool)],
        [60, 84, this.big("创建几何体", iGeom)],
        [144, 62, this.big("创建工序", iOp)],
        [211, 24, html`<div class="st m7">${iSmall1}${iSmall2}</div>`],
      ]), foot(0, "插入", 93, 28, 233))}
      ${this.grp(55, seq(245, [[250, 48, this.big("属性", iAttr, { dis: true, arrow: true })]]), foot(245, "操作", 248, 29, 288))}
      ${this.grp(236, seq(300, [
        [313, 86, html`<div class="lst a">
          <div class="lrow">${iGen}<span>生成刀轨</span></div>
          <div class="lrow">${iGouge}<span>过切检查</span></div></div>`],
        [407, 78, html`<div class="lst b">
          <div class="lrow">${iConfirm}<span>确认刀轨</span></div>
          <div class="lrow k">${iSim}<span>机床仿真</span></div>
          <div class="lrow">${iPost}<span>后处理</span></div></div>`],
        [494, 38, this.big("更多", iMoreA, { arrow: true })],
      ]), foot(300, "工序", 394, 28, 523))}
      ${this.grp(342, seq(536, [
        [545, 63, this.big("显示刀轨", iShow, { on: true })],
        [609, 63, this.big("选择刀轨", iSelect, { on: true })],
        [674, 60, this.big("刀轨报告", iReport)],
        [741, 30, html`<div class="st m3"><div class="hlb">${iHlView}</div>${iScrew}</div>`],
        [776, 8, html`<div class="at">${tri}</div>`],
        [805, 17, html`<div class="st m3">${iUp}${iLayers}${iDown}</div>`],
        [832, 44, this.big("更多", iMoreB, { arrow: true })],
      ]), foot(536, "显示", 683, 28, 865))}
      ${this.grp(262, seq(878, [
        [891, 24, html`<div class="st m7">${iPrev}${iStepB}</div>`],
        [923, 8, html`<div class="at">${tri}</div>`],
        [942, 24, html`<div class="st m7">${iPause}${iStepF}</div>`],
        [974, 8, html`<div class="at">${tri}</div>`],
        [993, 32, this.big("播放", iPlay)],
        [1033, 96, html`<div class="slider"><div class="track"><i class="thumb"></i></div><div class="sl">速度</div></div>`],
      ]), foot(878, "刀轨动画", 971, 56, 1127))}
      ${this.grp(65, seq(1140, [
        [1152, 26, html`<div class="st m7">${iIpw1}${iIpw2}</div>`],
        [1185, 8, html`<div class="at">${tri}</div>`],
      ]), foot(1140, "IPW", 1149, 26, 1192))}
      ${this.grp(150, html`<div class="gcol">
        <div class="grow r1">${seq(1205, [[1212, 17, g1], [1236, 17, g2], [1259, 17, g3], [1283, 17, g4], [1304, 1, html`<i class="vb"></i>`], [1311, 17, g5]])}</div>
        <div class="grow r2">${seq(1205, [[1212, 17, g6], [1237, 15, g7], [1258, 1, html`<i class="vb"></i>`], [1264, 16, g8], [1288, 16, g9], [1310, 17, g10], [1334, 17, g11]])}</div>
      </div>`, foot(1205, "加工工具 - GC工具...", 1207, 126, 1342))}
      ${this.grp(90, seq(1355, [
        [1367, 26, html`<div class="st m7">${f1}${f3}</div>`],
        [1403, 40, this.big("更多", html`<div class="f2w">${f2}</div>`, { arrow: true })],
      ]), foot(1355, "特征", 1377, 28, 1432))}
      ${this.grp(50, "", seq(1445, [[1481, 8, tri]]), true)}
    </div>`;
  }

  private toolbar() {
    const vs = html`<i class="vs"></i>`;
    return html`<div class="tools">${seq(0, [
      [2, 10, ic(10, 12, svg`<path d="M0 1.500h10M0 6h10M0 10.500h10" stroke="#333"/>`)],
      [19, 52, html`<span class="menu">菜单(<u>M</u>)</span>`],
      [76, 8, tri], [91, 1, vs],
      [101, 23, html`<div class="hl">${t1}</div>`],
      [128, 17, t2], [155, 17, t3], [178, 17, t4],
      [206, 1, vs],
      [215, 23, html`<div class="hl">${t5}</div>`],
      [242, 17, t6], [270, 1, vs],
      [283, 182, html`<div class="combo"><span>刀轨</span><i class="tri"></i></div>`],
      [474, 17, t7],
      [500, 191, html`<div class="combo"><span>整个装配</span><i class="tri"></i></div>`],
      [699, 17, t8], [720, 8, tri],
      [738, 17, t9], [762, 17, t10], [788, 17, t11], [812, 17, t12], [837, 8, tri],
      [856, 17, t13], [881, 16, t14], [908, 1, vs],
      [918, 23, html`<div class="hl">${t15}</div>`],
      [945, 18, axesEye], [969, 18, axesNo], [997, 1, vs],
      [1010, 18, t16], [1034, 8, tri],
      [1052, 16, t17], [1078, 1, vs],
      [1481, 8, tri],
    ])}</div>`;
  }

  private dialog() {
    const sel = (t: string) => html`<div class="sel"><span>${t}</span>${tri}</div>`;
    const hdr = (t: string) => html`<div class="sh"><i class="dtri"></i>${t}</div>`;
    const rows: [string, string][] = [["程序", "NC_PROGRAM"], ["刀具", "NONE"], ["几何体", "MCS_MILL"], ["方法", "DRILL_METHOD"]];
    return html`<div class="dlg">
      <div class="dtitle">${seq(0, [
        [-1, 13, ic(13, 14, svg`<circle cx="6" cy="7" r="3.500" fill="none" stroke="#fff" stroke-width="2.200"/><path d="M6 1v2M6 11v2M0 7h2M10 7h2M2 3l1.500 1.500M10 3L8.500 4.500M2 11l1.500-1.500M10 11L8.500 9.500" stroke="#fff" stroke-width="1.600"/>`)],
        [22, 72, html`<span class="dtt">创建工序</span>`],
        [320, 12, html`<b class="q">?</b>`],
        [347, 12, ic(12, 12, svg`<path d="M1 1l10 10M11 1L1 11" stroke="#fff" stroke-width="1.800"/>`)],
      ])}</div>
      <div class="sec s1">${hdr("类型")}${sel("drill")}</div>
      <div class="sec s2">${hdr("工序子类型")}
        <div class="grid">${sub.map((s, i) => html`<div class="cell"><div class="cell ${i === 0 ? "on" : ""}">${s}</div></div>`)}</div>
      </div>
      <div class="sec s3">${hdr("位置")}
        <div class="rows">${rows.map(([a, b]) => html`<div class="prow"><span>${a}</span>${sel(b)}</div>`)}</div>
      </div>
      <div class="sec s4">${hdr("名称")}<div class="inp"><span>SPOT_FACING</span></div></div>
      <div class="btns"><div class="btn p">确定</div><div class="btn">应用</div><div class="btn">取消</div></div>
    </div>`;
  }

  private axes() {
    const t = (x: number, y: number, c: string, s: string, fs = 12) =>
      svg`<text x=${x} y=${y} fill=${c} font-size=${fs} font-family="Liberation Sans">${s}</text>`;
    const blue = "#0033cc", bl2 = "#1a1aee", g = "#2f8f2f", r = "#c22828";
    return html`<svg class="cv" width="1079" height="768" viewBox="0 225 1079 768">
      <path d="M535 547L586 530V592M535 547L577 567V628L628 613L586 592" fill="none" stroke="#2a2aee" stroke-width=".8"/>
      <path d="M586 530V592" stroke="#b0b4f0" stroke-width="1.500"/>
      <path d="M577 567V628" stroke="#1a1aee" stroke-width="1.200"/>
      <path d="M533.500 490V520" stroke="#b4bcec" stroke-width="2"/>
      <path d="M533.500 530V616" stroke=${blue} stroke-width="2.600"/>
      <path d="M527 609H541" stroke=${blue} stroke-width="1.500"/>
      <polygon points="533.500,488 530.500,500 536.500,500" fill=${blue}/>
      <polygon points="533.500,513 529,532 538,532" fill=${blue}/>
      <path d="M534 608L600 590" stroke=${g} stroke-width="2"/>
      <polygon points="615,585 597,586 598,593" fill=${g}/>
      <path d="M615 585L624 582" stroke="#3a5ad8"/>
      <polygon points="637,577 623,578 625,584" fill=${bl2}/>
      <path d="M534 608L588 634" stroke=${r} stroke-width="2"/>
      <polygon points="600,640 584,630 582,637" fill=${r}/>
      <path d="M600 640L608 644" stroke="#3a5ad8"/>
      <polygon points="618,648 606,640 605,646" fill=${bl2}/>
      ${t(527, 484, "#3a4ae0", "Z")}
      ${t(538, 511, "#4a68e0", "ZM")}
      ${t(596, 580, "#3aa03a", "YM")}
      ${t(639, 580, "#2a3ae0", "Y")}
      ${t(582, 652, "#e04a4a", "XM")}
      ${t(618, 655, "#2a3ae0", "X")}
      <path d="M63 869L95 859L121 871L89 881ZM63 869V907L89 918V881M89 918L121 909V871" fill="#fff" stroke="#bbb"/>
      <rect x="89.500" y="840" width="5" height="30" fill=${blue} rx="1.500"/>
      <polygon points="92,823 87.500,842 96.500,842" fill=${blue}/>
      ${t(88, 819, "#3a6af0", "Z", 11)}
      <path d="M122 880L137 876" stroke=${g} stroke-width="4"/>
      <polygon points="147,872 133,871 135,880" fill=${g}/>
      ${t(150, 874, "#3a9a3a", "Y", 11)}
      <path d="M106 895L125 904" stroke=${r} stroke-width="4.500" stroke-linecap="round"/>
      <polygon points="137,909 123,899 120,908" fill=${r}/>
      ${t(139, 916, "#e04a4a", "X", 11)}
    </svg>`;
  }

  private nav() {
    const rows = [];
    for (let i = 0; i < 27; i++) {
      let c: unknown = "";
      if (i === 0) c = html`<div class="c1 n1">NC_PROGRAM</div>`;
      if (i === 1) c = html`<div class="c1 n2"><i class="tdots td1"></i>${folder()}<span>未用项</span></div>`;
      if (i === 2) c = html`<div class="c1 n3"><i class="tdots td2"></i>${ic(14, 13, svg`<path d="M1 7l4 5 8-11" fill="none" stroke="#2ecc40" stroke-width="1.800"/>`)}${folder()}<span>PROGRAM</span></div>`;
      if (i > 2) c = html`<div class="c1"></div>`;
      rows.push(html`<div class="tr">${c}<div class="c2"></div></div>`);
    }
    return html`<div class="nav">
      <div class="nh">${seq(1080, [[1093, 14, html`<i class="chk"></i>`], [1118, 150, html`<span>工序导航器 - 程序顺序</span>`]])}</div>
      <div class="tbl">
        <div class="th"><div>名称</div><div>换刀</div></div>
        <div class="tb">${rows}</div>
        <div class="sb">
          <div class="sa">${ic(8, 12, svg`<path d="M7 1L2 6l5 5" fill="none" stroke="#555" stroke-width="2"/>`)}</div>
          <div class="sbt"></div><div class="sbsp"></div>
          <div class="sa">${ic(8, 12, svg`<path d="M1 1l5 5-5 5" fill="none" stroke="#555" stroke-width="2"/>`)}</div>
        </div>
      </div>
      <div class="band"></div>
      <div class="sct"><i class="rtri"></i>相关性</div>
      <div class="sct"><i class="rtri"></i>细节</div>
    </div>`;
  }

  private sideTabs() {
    return html`<div class="side">${vseq(195, [
      [197, 20, sGear],
      [245, 24, sCube],
      [290, 24, sBracket],
      [319, 45, html`<div class="act">${sNav}</div>`],
      [371, 24, sTable],
      [413, 24, sCam],
      [468, 24, sGlobe],
      [521, 24, sClock],
      [565, 24, sTools],
      [606, 24, sCam2],
    ])}</div>`;
  }

  private taskbar() {
    const tb = (y: number, h: number, t: unknown, cls = "tbi"): Item => [y, h, html`<div class=${cls} style="height:${h}px">${t}</div>`];
    return html`<div class="task">${vseq(0, [
      tb(8, 20, tbWin),
      tb(57, 20, tbSearch),
      tb(108, 20, tbCortana),
      tb(157, 20, tbTask),
      tb(213, 28, tbEdge),
      tb(256, 58, tbFolder, "tbi acc"),
      tb(315, 58, tbSogou, "tbi acc"),
      tb(374, 58, tbNote, "tbi acc w"),
      tb(433, 58, html`<div class="nxi"><i></i><b>NX</b></div>`, "tbi acc on"),
      [733, 20, html`<div class="trayrow">${seq(0, [[16, 10, ic(10, 18, svg`<path d="M9 1L1 9l8 8" fill="none" stroke="#eee" stroke-width="1.200"/>`)]])}</div>`],
      [763, 20, html`<div class="trayrow">${seq(0, [[11, 20, trayShield], [41, 22, trayMon], [70, 24, traySpk]])}</div>`],
      [798, 20, html`<div class="trayrow">${seq(0, [[16, 18, html`<span class="zh">中</span>`], [50, 20, html`<span class="slogo">S</span>`]])}</div>`],
      [848, 30, html`<div class="trayrow">${seq(0, [[31, 30, ring]])}</div>`],
      [880, 22, html`<div class="clk">17:02</div>`],
      [900, 22, html`<div class="clk">星期五</div>`],
      [926, 22, html`<div class="clk">2020/6/26</div>`],
      [971, 16, html`<div class="trayrow">${seq(0, [[38, 19, html`<div class="note"><i class="a"></i><i class="b"></i><i class="c"></i><span class="badge">2</span></div>`]])}</div>`],
      [1011, 1, html`<div class="tl"></div>`],
    ], "tvit")}</div>`;
  }

  private overlays() {
    const c = "#1c7cd6";
    return html`
      <div class="ime">${seq(1234, [
        [1234, 26, html`<span class="slogo lg">S</span>`],
        [1265, 16, html`<span class="ime-t">中</span>`],
        [1288, 14, html`<span class="ime-t">°,</span>`],
        [1309, 16, ic(16, 16, svg`<circle cx="8" cy="8" r="7" fill="none" stroke=${c} stroke-width="1.300"/><circle cx="5.500" cy="6.500" r="1" fill=${c}/><circle cx="10.500" cy="6.500" r="1" fill=${c}/><path d="M4.500 10q3.500 3 7 0" fill="none" stroke=${c}/>`)],
        [1333, 14, ic(14, 18, svg`<rect x="4" y="0" width="6" height="11" rx="3" fill=${c}/><path d="M1 7a6 6 0 0 0 12 0M7 13v4M3 17h8" fill="none" stroke=${c} stroke-width="1.300"/>`)],
        [1353, 16, ic(16, 12, svg`<rect x="0" y="0" width="16" height="12" rx="1.500" fill=${c}/><path d="M2 3h12M2 6h12M4 9h8" stroke="#fff" stroke-dasharray="1.500 1"/>`)],
        [1377, 15, ic(15, 16, svg`<circle cx="6" cy="4" r="3" fill="#aab6c4"/><path d="M1 14q0-6 5-6t5 6z" fill="#aab6c4"/><rect x="8" y="9" width="7" height="6" fill="#fff" stroke="#aab6c4"/>`)],
        [1399, 15, ic(15, 14, svg`<path d="M5 0L0 3l2 3 2-1v9h7V5l2 1 2-3-5-3q-2 2-5 0z" fill=${c}/>`)],
        [1421, 14, ic(14, 14, svg`<rect x="0" y="0" width="6" height="6" fill=${c}/><rect x="8" y="0" width="6" height="6" fill="#5aa6e6"/><rect x="0" y="8" width="6" height="6" fill=${c}/><rect x="8" y="8" width="6" height="6" fill=${c}/>`)],
      ])}</div>
      <svg class="wm" width="72" height="82" viewBox="0 0 72 82">
        <polygon points="36,0 72,21 72,61 36,82 0,61 0,21" fill="#62bdf2" opacity=".55"/>
        <polygon points="36,0 72,21 50,25 36,17 22,25 0,21" fill="#c4e6fa" opacity=".65"/>
        <polygon points="36,23 52,32 36,41 20,32" fill="#dff2fd" opacity=".75"/>
        <polygon points="20,33 35,42 35,60 20,51" fill="#4fa8e4" opacity=".6"/>
        <polygon points="52,33 37,42 37,60 52,51" fill="#8fd2f6" opacity=".6"/>
      </svg>
      <div class="wmt">世界网</div>
      <div class="wmu">WWW.3DSJW.COM</div>`;
  }

  render() {
    return html`<div class="root">
      <div class="main">
        <div class="head">${this.titleRow()}${this.menuRow()}</div>
        ${this.ribbon()}
        ${this.toolbar()}
        <div class="work">
          <div class="left">
            <div class="docs">${seq(0, [
              [0, 10, ic(10, 14, svg`<path d="M-2 7L4 1l6 6M0 6v7h8V6" fill="none" stroke="#333"/>`)],
              [15, 60, html`<span class="dt">欢迎页面</span>`],
              [97, 162, html`<div class="dact-in dact">${seq(97, [
                [103, 16, ic(16, 16, svg`<path d="M6 1H1v4h5v4H1v4h5" fill="none" stroke="#fff"/><path d="M8 10a4 4 0 0 1 7-2M15 10a4 4 0 0 1-7 2M15 5v3h-3M8 15v-3h3" fill="none" stroke="#fff"/>`)],
                [123, 98, html`<span>_model13.prt</span>`],
                [229, 10, ic(10, 12, svg`<path d="M1 1h5l3 3v7H1z" fill="#fff"/><path d="M4 6h4M6 4l2 2-2 2" stroke="#005f87" fill="none"/>`)],
                [245, 8, ic(8, 8, svg`<path d="M1 1l6 6M7 1L1 7" stroke="#dde" stroke-width="1.600"/>`)],
              ])}</div>`],
            ])}</div>
            <div class="canvas">${this.axes()}${this.dialog()}</div>
          </div>
          ${this.nav()}
          ${this.sideTabs()}
        </div>
        <div class="status"><span>选择类型、子类型、位置，并指定工序名称</span></div>
      </div>
      ${this.taskbar()}
    </div>
    ${this.overlays()}`;
  }
}
